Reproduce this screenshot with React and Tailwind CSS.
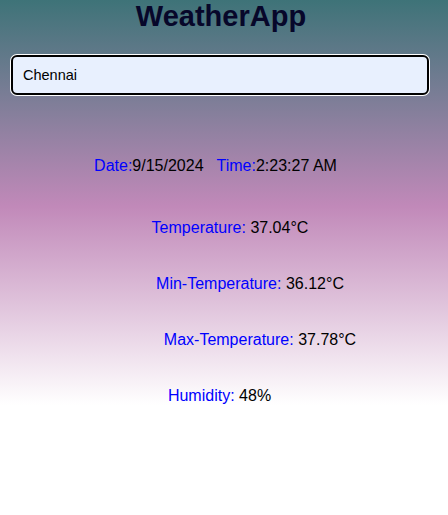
export default function App() {
  const rows = [
    { label: 'Temperature:', value: '37.04°C', cls: 'mt-[44px] pl-[12px]' },
    { label: 'Min-Temperature:', value: '36.12°C', cls: 'mt-[38px] pl-[52px]' },
    { label: 'Max-Temperature:', value: '37.78°C', cls: 'mt-[38px] pl-[72px]' },
    { label: 'Humidity:', value: '48%', cls: 'mt-[38px] pr-[9px]' },
  ];

  return (
    <div className="min-h-[515px] bg-white font-['Liberation_Sans',Arial,sans-serif]">
      <div className="flex flex-col bg-[linear-gradient(to_bottom,#3e7378_0%,#c189b9_51%,#ffffff_100%)]">
        <h1 className="pr-[6px] text-center text-[29px] leading-[33px] font-bold text-[#07072a]">WeatherApp</h1>

        <div className="mt-[22px] ml-[11px] mr-[19px]">
          <input
            type="text"
            defaultValue="Chennai"
            className="w-full h-[40px] rounded-[6px] border-2 border-black ring-1 ring-white bg-[#e8f0fe] px-[10px] text-[14.5px] text-black outline-none"
          />
        </div>

        <div className="mt-[62px] flex justify-center pr-[17px] text-[16px] leading-[18px]">
          <span className="text-[#0000ff]">Date:</span>
          <span className="text-black">9/15/2024</span>
          <span className="ml-[13px] text-[#0000ff]">Time:</span>
          <span className="text-black">2:23:27 AM</span>
        </div>

        {rows.map((r) => (
          <div key={r.label} className={`flex justify-center text-[16px] leading-[18px] ${r.cls}`}>
            <span className="text-[#0000ff]">{r.label}</span>
            <span className="ml-[4.5px] text-black">{r.value}</span>
          </div>
        ))}
      </div>
    </div>
  );
}
